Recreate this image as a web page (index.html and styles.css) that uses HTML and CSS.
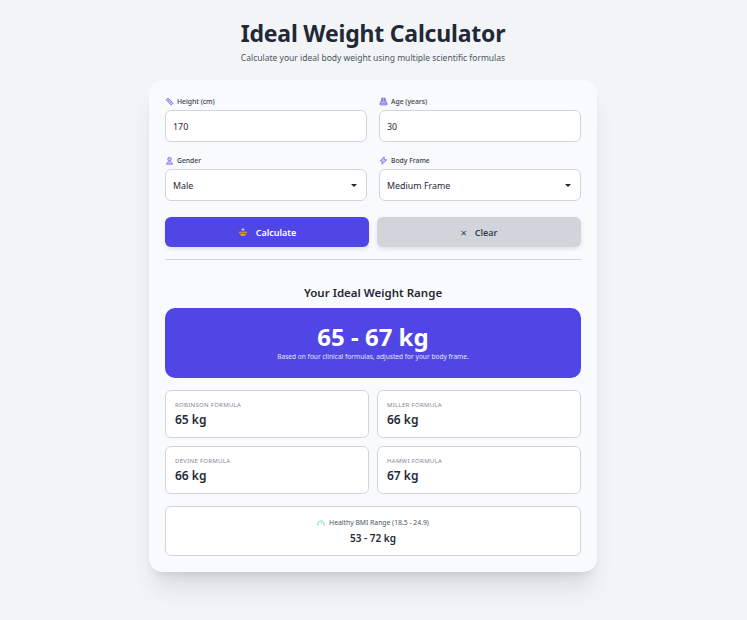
FILE: index.html
```html
<!DOCTYPE html>
<html>
<head>
  <meta charset="UTF-8">
  <title>Ideal Weight Calculator</title>
  <link rel="stylesheet" href="styles.css">
</head>
<body>
  <div class="page">
    <header class="header">
      <h1>Ideal Weight Calculator</h1>
      <p>Calculate your ideal body weight using multiple scientific formulas</p>
    </header>

    <main class="card">
      <div class="fields">
        <div class="field">
          <label>
            <svg class="icon" viewBox="0 0 16 16"><path d="M5 1.800 14.200 11 11 14.200 1.800 5zM5.500 5.500 7 7M8 4l1.500 1.500M7.800 8.200 9.300 9.700M10.500 6.800 12 8.300"/></svg>
            Height (cm)
          </label>
          <input type="text" value="170">
        </div>
        <div class="field">
          <label>
            <svg class="icon" viewBox="0 0 16 16"><path d="M5 2h6l1 5H4zM4 7l-2 3v4h12v-4l-2-3M2 11h12M6 2v5M10 2v5"/></svg>
            Age (years)
          </label>
          <input type="text" value="30">
        </div>
        <div class="field">
          <label>
            <svg class="icon" viewBox="0 0 16 16"><circle cx="8" cy="5.500" r="3.200"/><path d="M2.500 14.500c.6-3 2.600-4.500 5.500-4.500s4.900 1.500 5.500 4.500z"/></svg>
            Gender
          </label>
          <div class="select-wrap">
            <select>
              <option>Male</option>
              <option>Female</option>
            </select>
          </div>
        </div>
        <div class="field">
          <label>
            <svg class="icon" viewBox="0 0 16 16"><path d="M9 1.500 2 8.500l4 1.500-1 4.500 9-7.500-4.500-1z"/></svg>
            Body Frame
          </label>
          <div class="select-wrap">
            <select>
              <option>Medium Frame</option>
              <option>Small Frame</option>
              <option>Large Frame</option>
            </select>
          </div>
        </div>
      </div>

      <div class="actions">
        <button class="btn btn-primary">
          <svg class="btn-icon" viewBox="0 0 16 16"><path class="scale-top" d="M8 1.500v5M5.500 4h5"/><path class="scale-bowl" d="M1.500 7.500h13c0 3-1.500 5-3.500 5.500v1.500H5V13c-2-.5-3.500-2.500-3.500-5.500z"/><path class="scale-line" d="M2 10h12"/></svg>
          Calculate
        </button>
        <button class="btn btn-clear">
          <span class="times">×</span>
          Clear
        </button>
      </div>

      <hr class="divider">

      <h2 class="result-title">Your Ideal Weight Range</h2>

      <div class="banner">
        <div class="banner-value">65 - 67 kg</div>
        <div class="banner-note">Based on four clinical formulas, adjusted for your body frame.</div>
      </div>

      <div class="formulas">
        <div class="formula">
          <div class="formula-name">Robinson Formula</div>
          <div class="formula-value">65 kg</div>
        </div>
        <div class="formula">
          <div class="formula-name">Miller Formula</div>
          <div class="formula-value">66 kg</div>
        </div>
        <div class="formula">
          <div class="formula-name">Devine Formula</div>
          <div class="formula-value">66 kg</div>
        </div>
        <div class="formula">
          <div class="formula-name">Hamwi Formula</div>
          <div class="formula-value">67 kg</div>
        </div>
      </div>

      <div class="bmi">
        <div class="bmi-label">
          <svg class="bmi-icon" viewBox="0 0 16 16"><path d="M2 13a6.500 6.500 0 1 1 12 0M8 10l2-3"/></svg>
          Healthy BMI Range (18.5 - 24.9)
        </div>
        <div class="bmi-value">53 - 72 kg</div>
      </div>
    </main>
  </div>
</body>
</html>
```

FILE: styles.css
```css
* {
    box-sizing: border-box;
}

body {
    font-family: "Noto Sans", Arial, sans-serif;
    margin: 0;
    min-height: 620px;
    background-color: #f3f4f6;
    color: #1f2937;
}

.page {
    width: 448px;
    margin-left: 149px;
    padding-top: 15px;
}

.header {
    text-align: center;
    margin-bottom: 15px;
}

.header h1 {
    margin: 0;
    font-size: 23px;
    line-height: 36px;
    letter-spacing: -0.2px;
    font-weight: 700;
}

.header p {
    margin: 0;
    font-size: 8.500px;
    line-height: 14px;
    color: #4b5563;
}

.card {
    background-color: #f9fafb;
    border-radius: 14px;
    padding: 16px;
    box-shadow: 0 20px 25px -5px rgba(0, 0, 0, 0.1), 0 8px 10px -6px rgba(0, 0, 0, 0.1);
}

.fields {
    display: grid;
    grid-template-columns: 1fr 1fr;
    gap: 13px 12px;
}

.field label {
    display: flex;
    align-items: center;
    gap: 3px;
    height: 14px;
    padding-bottom: 3px;
    font-size: 6.800px;
    font-weight: 500;
    color: #374151;
}

.icon {
    width: 9px;
    height: 9px;
    fill: #c7c4f5;
    stroke: #6d63e8;
    stroke-width: 1.300;
}

.field input,
.field select {
    display: block;
    width: 100%;
    height: 32px;
    padding: 0 7px;
    border: 1px solid #d1d5db;
    border-radius: 6px;
    background-color: #fff;
    font-family: inherit;
    font-size: 8.900px;
    color: #1f2937;
    appearance: none;
}

.select-wrap {
    position: relative;
}

.select-wrap::after {
    content: "";
    position: absolute;
    top: 15px;
    right: 10px;
    border-left: 3px solid transparent;
    border-right: 3px solid transparent;
    border-top: 3px solid #1f2937;
}

.actions {
    display: flex;
    gap: 8px;
    margin-top: 16px;
}

.btn {
    flex: 1;
    display: flex;
    align-items: center;
    justify-content: center;
    gap: 8px;
    height: 30px;
    border: 0;
    border-radius: 6px;
    font-family: inherit;
    font-size: 9px;
    font-weight: 600;
    box-shadow: 0 2px 4px rgba(0, 0, 0, 0.1);
}

.btn-primary {
    background-color: #4f46e5;
    color: #fff;
}

.btn-icon {
    width: 10px;
    height: 10px;
    fill: none;
    stroke-width: 1.400;
}

.scale-top {
    stroke: #d1d5db;
}

.scale-bowl {
    fill: #f59e0b;
}

.scale-line {
    stroke: #4f46e5;
}

.btn-clear {
    background-color: #d1d5db;
    color: #374151;
}

.times {
    font-size: 11px;
    line-height: 1;
    font-weight: 400;
}

.divider {
    height: 1px;
    margin: 12px 0 0;
    border: 0;
    background-color: #d1d5db;
}

.result-title {
    margin: 24px 0 6px;
    text-align: center;
    font-size: 11.500px;
    line-height: 18px;
    font-weight: 600;
}

.banner {
    height: 70px;
    padding-top: 14px;
    border-radius: 10px;
    background-color: #4f46e5;
    color: #fff;
    text-align: center;
}

.banner-value {
    font-size: 24px;
    line-height: 30px;
    font-weight: 700;
}

.banner-note {
    font-size: 6.600px;
    line-height: 10px;
    color: #e0e7ff;
}

.formulas {
    display: grid;
    grid-template-columns: 1fr 1fr;
    gap: 8px;
    margin-top: 12px;
}

.formula {
    height: 48px;
    padding: 9px 9px;
    border: 1px solid #d1d5db;
    border-radius: 6px;
    background-color: #fff;
}

.formula-name {
    font-size: 6px;
    line-height: 10px;
    letter-spacing: 0.3px;
    text-transform: uppercase;
    color: #808793;
}

.formula-value {
    margin-top: 1px;
    font-size: 12px;
    line-height: 18px;
    font-weight: 600;
}

.bmi {
    height: 50px;
    margin-top: 12px;
    padding-top: 10px;
    border: 1px solid #d1d5db;
    border-radius: 6px;
    background-color: #fff;
    text-align: center;
}

.bmi-label {
    display: flex;
    align-items: center;
    justify-content: center;
    gap: 4px;
    font-size: 6.800px;
    line-height: 12px;
    color: #4b5563;
}

.bmi-icon {
    width: 8px;
    height: 8px;
    fill: none;
    stroke: #34d399;
    stroke-width: 1.500;
}

.bmi-value {
    margin-top: 2px;
    font-size: 10px;
    line-height: 14px;
    font-weight: 600;
}
```
